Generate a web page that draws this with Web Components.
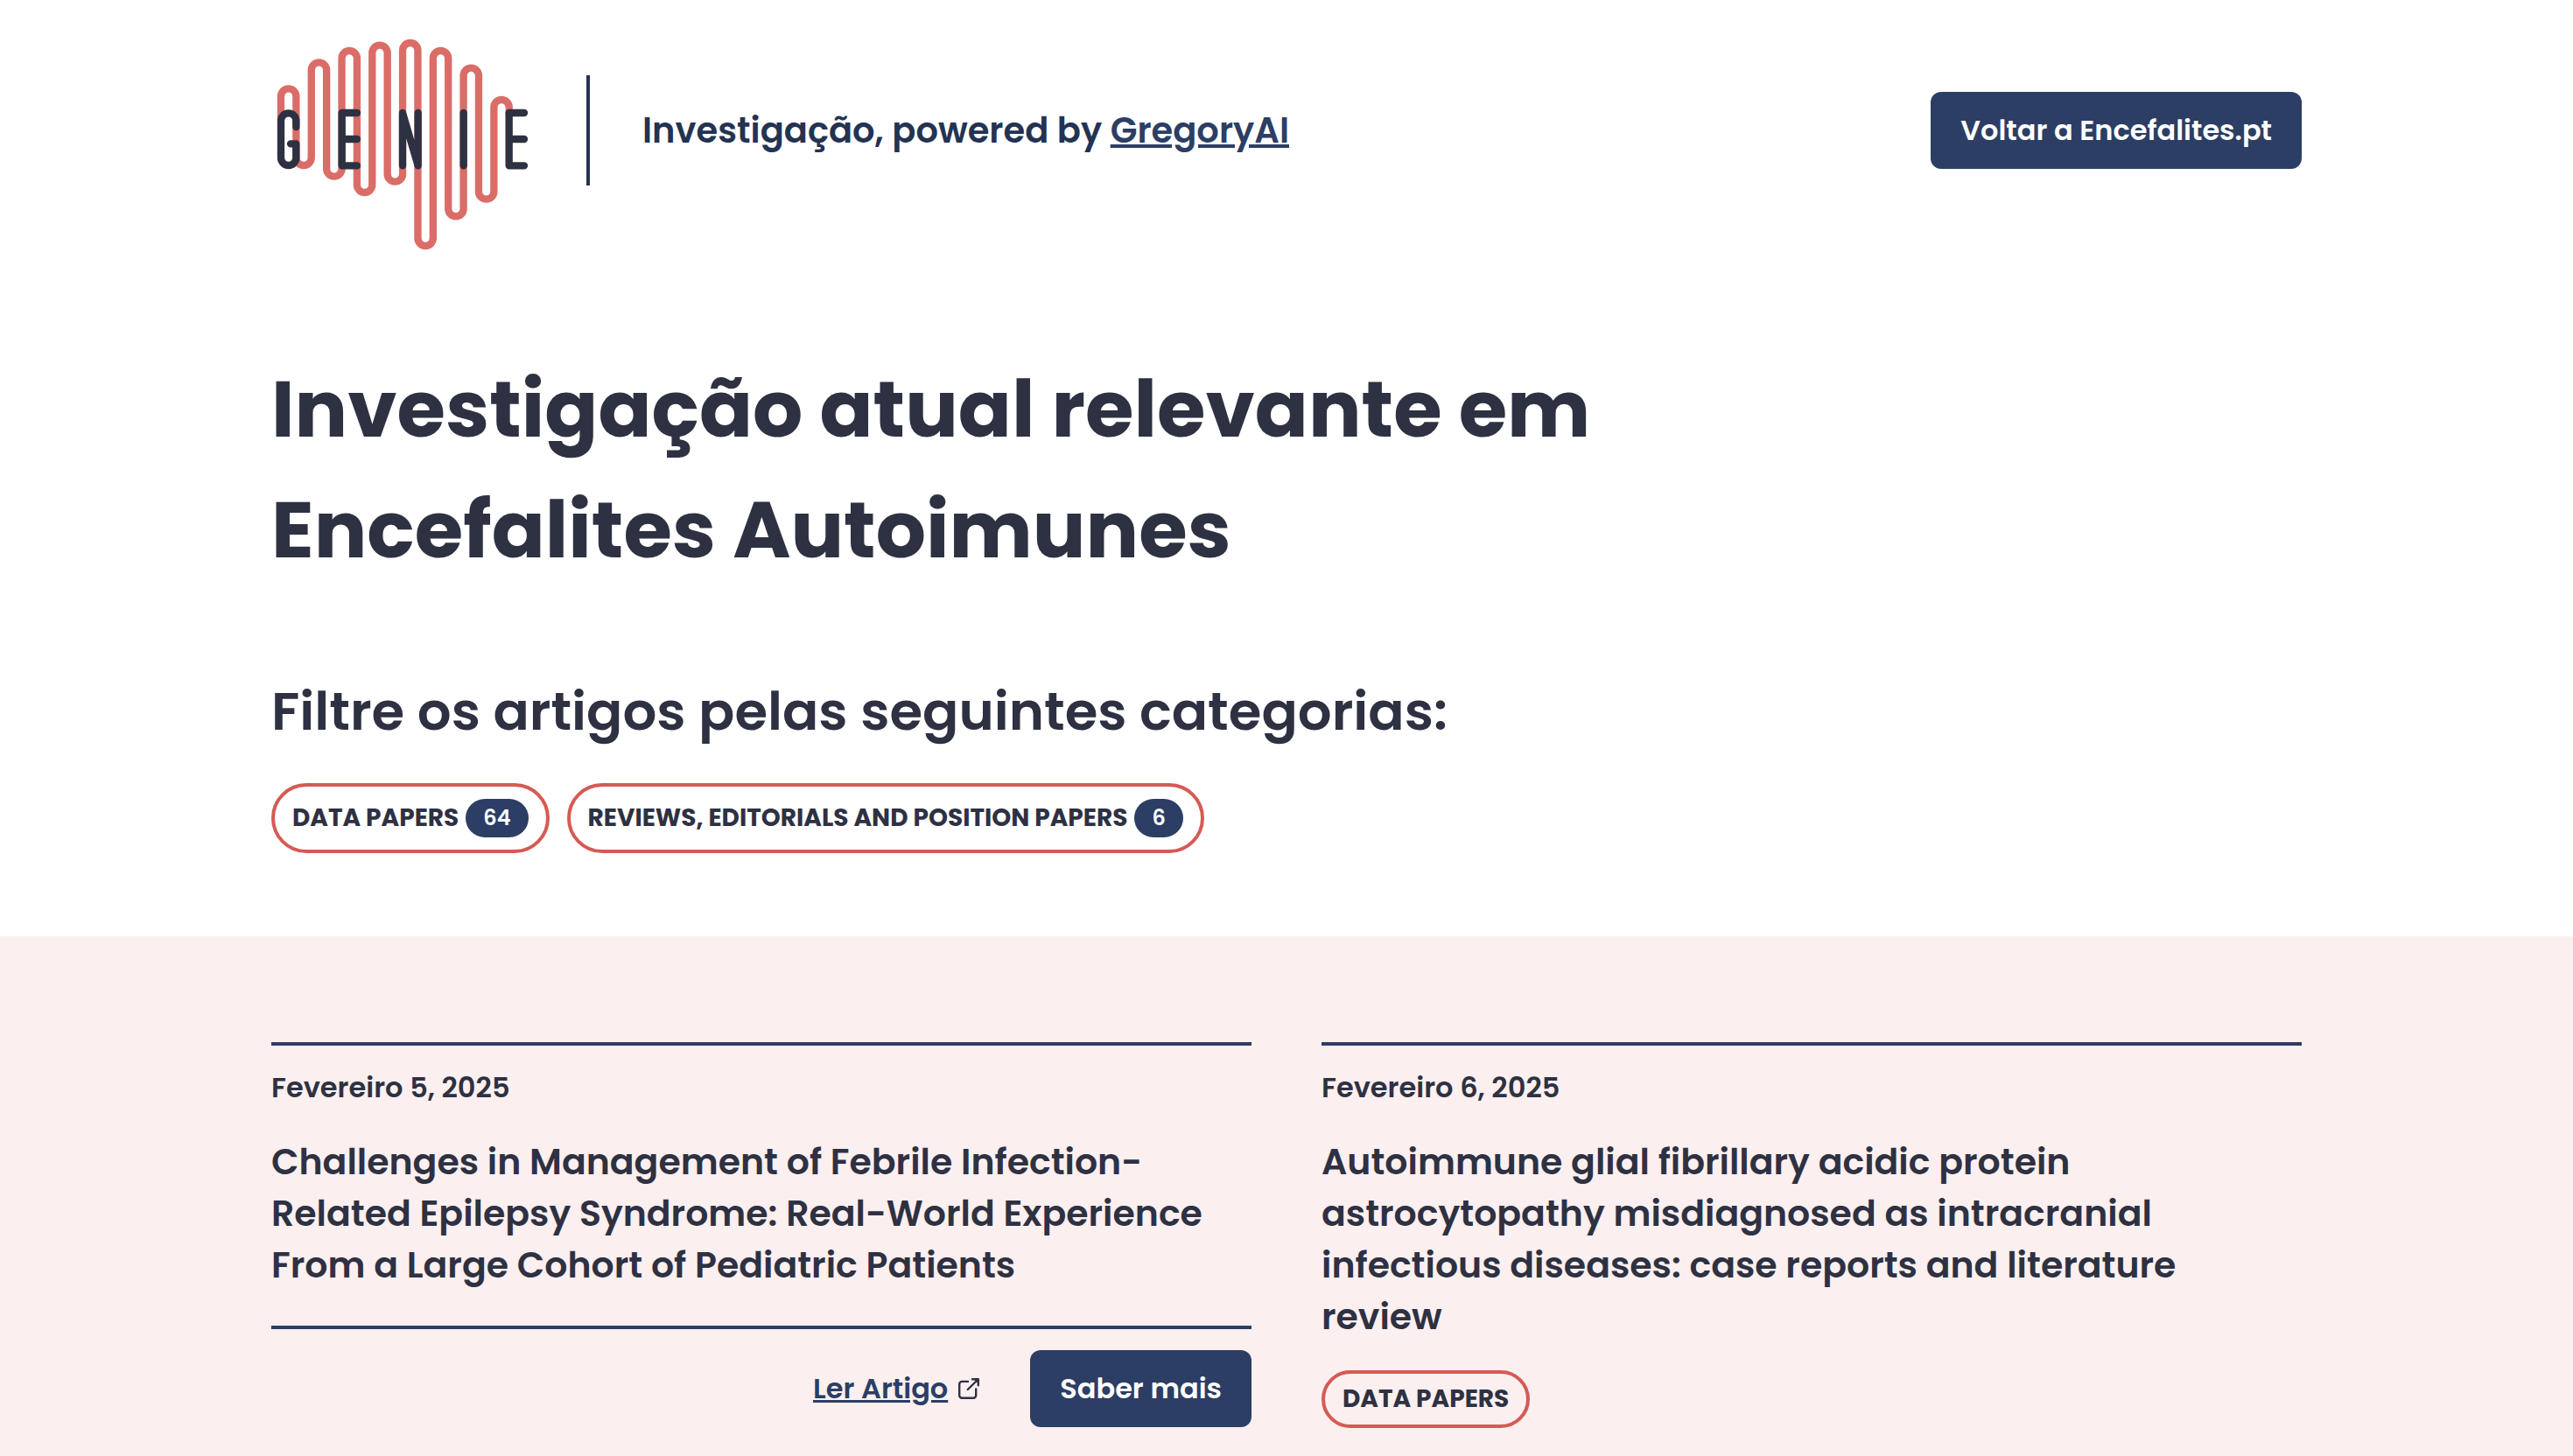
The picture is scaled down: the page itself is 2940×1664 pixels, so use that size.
<!DOCTYPE html>
<html lang="pt">
<head>
<meta charset="utf-8">
<meta name="viewport" content="width=device-width, initial-scale=1">
<title>GENIE – Investigação atual relevante em Encefalites Autoimunes</title>
<style>
  :root {
    --ink: #2e3142;
    --navy: #2c3e64;
    --navy-dark: #243352;
    --coral: #d65a54;
    --blush: #fbefef;
  }
  body {
    margin: 0;
    background: #fff;
    color: var(--ink);
    font-family: Poppins, Inter, "Open Sans", sans-serif;
    font-weight: 600;
  }
</style>
</head>
<body>
<genie-page></genie-page>

<script>
  class BaseElement extends HTMLElement {
    connectedCallback() {
      if (this.shadowRoot) return;
      this.attachShadow({ mode: 'open' }).innerHTML = this.render();
    }
  }

  /* Brain-shaped waveform with the GENIE lettering strokes over it */
  customElements.define('genie-logo', class extends BaseElement {
    render() {
      const tops = [232, 142, 102, 83, 75, 102, 161, 270];
      const bottoms = [519, 557, 612, 575, 795, 694, 635];
      let wave = 'M93 350';
      tops.forEach((top, i) => {
        wave += `V${top + 38}a26 26 0 0 1 52.1 0`;
        if (i < bottoms.length) wave += `V${bottoms[i] - 38}a26 26 0 0 0 52.2 0`;
      });
      wave += 'V330';
      return `
        <style>
          :host { display: block; flex: none; }
          svg { display: block; width: 300px; height: 274px; }
        </style>
        <svg viewBox="60 -24 900 822" fill="none" stroke-width="25" stroke-linecap="round" stroke-linejoin="round" role="img" aria-label="GENIE">
          <path stroke="#da6d67" d="${wave}"/>
          <g stroke="#2e3142">
            <path d="M145 375V354a26 26 0 0 0-52 0V481a26 26 0 0 0 52 0V433H126"/>
            <path d="M354 327H302V508H354M302 417H354"/>
            <path d="M510 508V327L563 508V327"/>
            <path d="M719 327V508"/>
            <path d="M927 327H875V508H927M875 417H927"/>
          </g>
        </svg>`;
    }
  });

  customElements.define('solid-link', class extends BaseElement {
    render() {
      return `
        <style>
          :host { display: block; flex: none; }
          a {
            display: block; padding: 20px 34px; border-radius: 12px;
            background: var(--navy); color: #fff; text-decoration: none;
            font-size: 32px; line-height: 48px; white-space: nowrap;
          }
        </style>
        <a href="${this.getAttribute('href') || '#'}"><slot></slot></a>`;
    }
  });

  customElements.define('category-pill', class extends BaseElement {
    render() {
      const count = this.getAttribute('count');
      return `
        <style>
          :host { display: block; flex: none; }
          button {
            display: flex; align-items: center; gap: 8px;
            box-sizing: border-box; height: ${count ? 80 : 66}px; padding: 0 20px;
            border: 4px solid var(--coral); border-radius: 40px; background: none;
            color: inherit; font: inherit; font-weight: 700;
            font-size: 28px; line-height: 40px; text-transform: uppercase; white-space: nowrap;
          }
          .count {
            padding: 0 20px; border-radius: 22px;
            background: var(--navy); color: #fff;
            font-size: 24px; line-height: 44px; font-weight: 600;
          }
        </style>
        <button type="button"><slot></slot>${count ? `<span class="count">${count}</span>` : ''}</button>`;
    }
  });

  customElements.define('site-header', class extends BaseElement {
    render() {
      return `
        <style>
          :host { display: block; }
          header { display: flex; align-items: center; justify-content: space-between; padding-top: 12px; }
          .brand { display: flex; align-items: center; gap: 60px; }
          .rule { width: 4px; height: 126px; background: var(--navy-dark); }
          p { margin: 0; color: var(--navy-dark); font-size: 40px; line-height: 60px; }
          a { color: var(--navy); text-decoration-thickness: 4px; text-underline-offset: 2px; }
        </style>
        <header>
          <div class="brand">
            <genie-logo></genie-logo>
            <div class="rule"></div>
            <p>Investigação, powered by <a href="#">GregoryAI</a></p>
          </div>
          <solid-link href="#">Voltar a Encefalites.pt</solid-link>
        </header>`;
    }
  });

  customElements.define('category-filter', class extends BaseElement {
    render() {
      return `
        <style>
          :host { display: block; }
          h2 { margin: 0; font-size: 61px; line-height: 92px; font-weight: 600; }
          .pills { display: flex; flex-wrap: wrap; gap: 20px; margin-top: 36px; }
        </style>
        <h2>Filtre os artigos pelas seguintes categorias:</h2>
        <div class="pills"><slot></slot></div>`;
    }
  });

  customElements.define('article-card', class extends BaseElement {
    render() {
      return `
        <style>
          :host { display: block; border-top: 4px solid var(--navy); }
          time { display: block; margin-top: 24px; font-size: 32px; line-height: 48px; }
          h3 { margin: 31px 0 0; font-size: 41px; line-height: 59px; font-weight: 600; }
          ::slotted(card-actions) { margin-top: 40px; }
          ::slotted(category-pill) { width: fit-content; margin-top: 32px; }
        </style>
        <article>
          <time datetime="${this.getAttribute('datetime')}">${this.getAttribute('date')}</time>
          <h3>${this.getAttribute('heading')}</h3>
          <slot></slot>
        </article>`;
    }
  });

  customElements.define('card-actions', class extends BaseElement {
    render() {
      return `
        <style>
          :host {
            display: flex; align-items: center; justify-content: flex-end; gap: 58px;
            padding-top: 24px; border-top: 4px solid var(--navy);
          }
          .read { display: flex; align-items: center; gap: 12px; font-size: 32px; line-height: 48px; }
          a { color: var(--navy); text-decoration-thickness: 3px; text-underline-offset: 2px; }
          svg { display: block; width: 24px; height: 24px; }
        </style>
        <span class="read">
          <a href="#">Ler Artigo</a>
          <svg viewBox="0 0 24 24" fill="none" stroke="#2e3142" stroke-width="2.4" stroke-linecap="round" stroke-linejoin="round" aria-hidden="true">
            <path d="M11 3.900H4.200a3 3 0 0 0-3 3V19.800a3 3 0 0 0 3 3H17.200a3 3 0 0 0 3-3V12.500"/>
            <path d="M10.800 13L22.500 1.500"/>
            <path d="M16 1.200H22.800V8.200" />
            <path d="M19 1.500H22.500V5z" fill="#2e3142" stroke-width="1"/>
          </svg>
        </span>
        <solid-link href="#">Saber mais</solid-link>`;
    }
  });

  customElements.define('genie-page', class extends BaseElement {
    render() {
      return `
        <style>
          :host { display: flex; flex-direction: column; min-height: 100vh; }
          .wrap { box-sizing: border-box; width: 100%; max-width: 2400px; margin: 0 auto; padding: 0 40px; }
          h1 { max-width: 1620px; margin: 113px 0 0; font-size: 90px; line-height: 138px; font-weight: 700; }
          category-filter { margin-top: 92px; }
          .results { flex: 1; margin-top: 95px; padding: 121px 0 24px; background: var(--blush); }
          .grid { display: grid; grid-template-columns: 1fr 1fr; align-items: start; gap: 80px; }
        </style>
        <div class="wrap">
          <site-header></site-header>
          <h1>Investigação atual relevante em Encefalites Autoimunes</h1>
          <category-filter>
            <category-pill count="64">Data papers</category-pill>
            <category-pill count="6">Reviews, editorials and position papers</category-pill>
          </category-filter>
        </div>
        <main class="results">
          <div class="wrap grid">
            <article-card datetime="2025-02-05" date="Fevereiro 5, 2025"
              heading="Challenges in Management of Febrile Infection-Related Epilepsy Syndrome: Real-World Experience From a Large Cohort of Pediatric Patients">
              <card-actions></card-actions>
            </article-card>
            <article-card datetime="2025-02-06" date="Fevereiro 6, 2025"
              heading="Autoimmune glial fibrillary acidic protein astrocytopathy misdiagnosed as intracranial infectious diseases: case reports and literature review">
              <category-pill>Data papers</category-pill>
            </article-card>
          </div>
        </main>`;
    }
  });
</script>
</body>
</html>
